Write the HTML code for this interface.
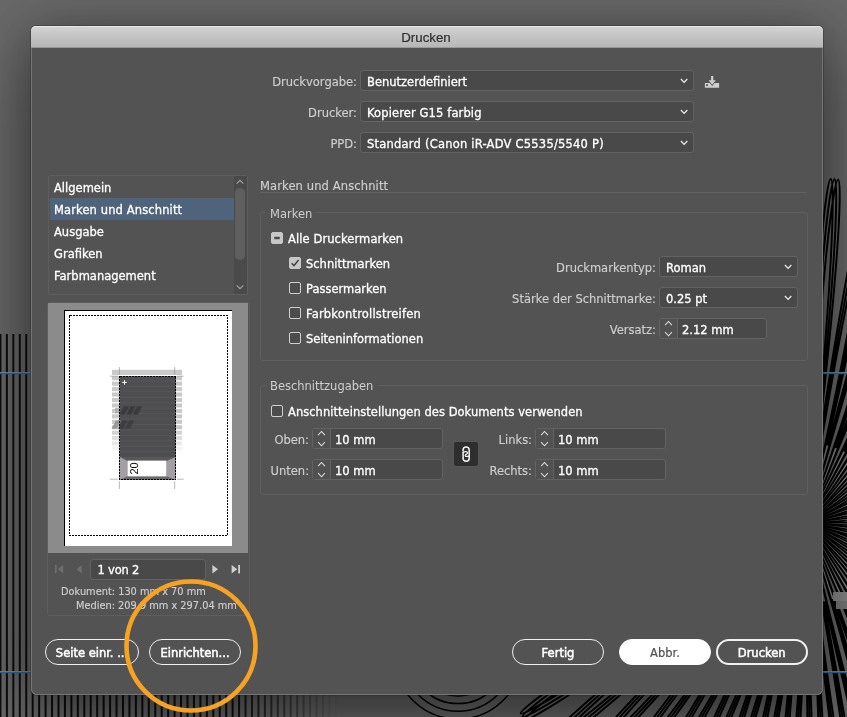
<!DOCTYPE html>
<html lang="de">
<head>
<meta charset="utf-8">
<title>Drucken</title>
<style>
html,body{margin:0;padding:0;}
body{width:847px;height:717px;overflow:hidden;position:relative;background:#696969;font-family:"DejaVu Sans","Liberation Sans",sans-serif;font-size:11.5px;color:#fff;}
.abs{position:absolute;}
#bg{position:absolute;left:0;top:0;width:847px;height:717px;}
#dlg{position:absolute;left:31px;top:26px;width:792px;height:669px;background:#535353;border-radius:5px 5px 6px 6px;box-shadow:inset 0 0 0 1px #767676,0 0 0 1px rgba(30,30,30,.3),0 0 44px rgba(0,0,0,.14),0 22px 70px rgba(0,0,0,.52);}
#tb{position:absolute;left:0;top:0;width:792px;height:22px;border-radius:5px 5px 0 0;background:linear-gradient(#d4d4d4,#c6c6c6 40%,#b6b6b6);box-shadow:inset 0 1px 0 #e6e6e6,inset 0 -1px 0 #9a9a9a;}
#tb span{-webkit-text-stroke:.2px #2e2e2e;position:absolute;left:-1.2px;width:792px;top:3.6px;line-height:16px;text-align:center;color:#2e2e2e;font-family:"Liberation Sans",sans-serif;font-size:13.3px;will-change:transform;}
.t{-webkit-text-stroke:0.3px #fff;position:absolute;white-space:nowrap;line-height:14px;height:14px;}
.lbl{color:#cfcfcf;-webkit-text-stroke:0.15px #cfcfcf;}
.r{text-align:right;}
.fld{position:absolute;box-sizing:border-box;background:#494949;border:1px solid #636363;border-radius:3px;height:21px;}
.fld .v{-webkit-text-stroke:0.3px #fff;position:absolute;left:6px;top:3.6px;line-height:14px;white-space:nowrap;}
.fs{position:absolute;box-sizing:border-box;border:1px solid #5f5f5f;border-radius:3px;}
.lg{position:absolute;background:#535353;color:#cfcfcf;line-height:14px;padding:0 4px;white-space:nowrap;}
.cb{position:absolute;box-sizing:border-box;width:12px;height:12px;border:1px solid #d0d0d0;border-radius:2px;background:#4c4c4c;}
.cb.on{background:#c8c8c8;border-color:#c8c8c8;}
.btn{position:absolute;box-sizing:border-box;height:26px;border:1px solid #f0f0f0;border-radius:13px;text-align:center;line-height:26.9px;font-size:11.5px;color:#fff;white-space:nowrap;-webkit-text-stroke:0.5px #fff;}
svg{position:absolute;overflow:visible;}
.sp::before{content:"";position:absolute;left:17px;top:0;width:1px;height:19px;background:#636363;}
.sp::after{content:"";position:absolute;left:0;top:0;width:17px;height:19px;background:#515151;border-radius:2px 0 0 2px;}
</style>
</head>
<body>
<svg id="bg" width="847" height="717" viewBox="0 0 847 717"><defs><linearGradient id="sf" x1="0" y1="0" x2="1" y2="0"><stop offset="0" stop-color="#fff"/><stop offset="0.68" stop-color="#fff"/><stop offset="1" stop-color="#000"/></linearGradient><mask id="sm" maskUnits="userSpaceOnUse" x="0" y="330" width="340" height="390"><rect x="0" y="330" width="340" height="390" fill="url(#sf)"/></mask></defs><g mask="url(#sm)"><path d="M0.44 334V717M6.89 334V717M13.34 334V717M19.79 334V717M26.24 334V717M32.69 334V717M39.14 334V717M45.59 334V717M52.04 334V717M58.49 334V717M64.94 334V717M71.39 334V717M77.84 334V717M84.29 334V717M90.74 334V717M97.19 334V717M103.64 334V717M110.09 334V717M116.54 334V717M122.99 334V717M129.44 334V717M135.89 334V717M142.34 334V717M148.79 334V717M155.24 334V717M161.69 334V717M168.14 334V717M174.59 334V717M181.04 334V717M187.49 334V717M193.94 334V717M200.39 334V717M206.84 334V717M213.29 334V717M219.74 334V717M226.19 334V717M232.64 334V717M239.09 334V717M245.54 334V717M251.99 334V717M258.44 334V717M264.89 334V717M271.34 334V717M277.79 334V717M284.24 334V717M290.69 334V717M297.14 334V717M303.59 334V717M310.04 334V717M316.49 334V717M322.94 334V717M329.39 334V717M335.84 334V717" stroke="#0e0e0e" stroke-width="2" fill="none"/></g><path d="M808 523C716.5 72.2 754.5 66.1 808 523M808 523C721.4 71.2 759.5 65.6 808 523M808 523C726.2 70.3 764.4 65.1 808 523M808 523C767.5 64.8 806.0 63.0 808 523M808 523C772.5 64.4 811.0 63.0 808 523M808 523C777.4 64.0 816.0 63.1 808 523M808 523C819.1 63.1 857.5 65.7 808 523M808 523C824.1 63.3 862.5 66.2 808 523M808 523C829.0 63.5 867.4 66.9 808 523M808 523C870.5 67.3 908.4 74.1 808 523M808 523C875.4 68.0 913.3 75.2 808 523M808 523C880.3 68.7 918.1 76.4 808 523M808 523C921.1 77.1 958.0 88.2 808 523M808 523C925.9 78.4 962.7 89.8 808 523M808 523C930.8 79.7 967.4 91.5 808 523M808 523C970.3 92.6 1005.8 107.7 808 523M808 523C975.0 94.4 1010.3 109.9 808 523M808 523C979.6 96.2 1014.7 112.1 808 523M808 523C1017.5 113.5 1051.0 132.4 808 523M808 523C1021.9 115.8 1055.3 135.1 808 523M808 523C1026.3 118.1 1059.4 137.8 808 523M808 523C1062.0 139.5 1093.2 162.1 808 523M808 523C1066.2 142.3 1097.1 165.2 808 523M808 523C1070.3 145.1 1101.0 168.4 808 523M808 523C1103.4 170.4 1131.9 196.3 808 523M808 523C1107.2 173.6 1135.4 199.8 808 523M808 523C1110.9 176.8 1138.8 203.4 808 523M808 523C1141.0 205.7 1166.4 234.6 808 523M808 523C1144.4 209.3 1169.5 238.5 808 523M808 523C1147.8 212.9 1172.6 242.5 808 523M808 523C1174.4 244.9 1196.4 276.6 808 523M808 523C1177.4 248.9 1199.1 280.8 808 523M808 523C1180.4 252.9 1201.7 285.0 808 523M808 523C1203.3 287.7 1221.6 321.6 808 523M808 523C1205.8 292.0 1223.7 326.1 808 523M808 523C1208.3 296.3 1225.8 330.6 808 523M808 523C1227.1 333.5 1241.5 369.2 808 523M808 523C1229.2 338.0 1243.2 373.9 808 523M808 523C1231.1 342.6 1244.8 378.6 808 523M808 523C1245.7 381.6 1256.0 418.7 808 523M808 523C1247.2 386.3 1257.1 423.5 808 523M808 523C1248.7 391.1 1258.2 428.4 808 523M808 523C1258.8 431.5 1264.9 469.5 808 523M808 523C1259.8 436.4 1265.4 474.5 808 523M808 523C1260.7 441.2 1265.9 479.4 808 523M808 523C1266.2 482.5 1268.0 521.0 808 523M808 523C1266.6 487.5 1268.0 526.0 808 523M808 523C1267.0 492.4 1267.9 531.0 808 523M808 523C1267.9 534.1 1265.3 572.5 808 523M808 523C1267.7 539.1 1264.8 577.5 808 523M808 523C1267.5 544.0 1264.1 582.4 808 523M808 523C1263.7 585.5 1256.9 623.4 808 523M808 523C1263.0 590.4 1255.8 628.3 808 523M808 523C1262.3 595.3 1254.6 633.1 808 523M808 523C1253.9 636.1 1242.8 673.0 808 523M808 523C1252.6 640.9 1241.2 677.7 808 523M808 523C1251.3 645.8 1239.5 682.4 808 523M808 523C1238.4 685.3 1223.3 720.8 808 523M808 523C1236.6 690.0 1221.1 725.3 808 523M808 523C1234.8 694.6 1218.9 729.7 808 523M808 523C1217.5 732.5 1198.6 766.0 808 523M808 523C1215.2 736.9 1195.9 770.3 808 523M808 523C1212.9 741.3 1193.2 774.4 808 523M808 523C1191.5 777.0 1168.9 808.2 808 523M808 523C1188.7 781.2 1165.8 812.1 808 523M808 523C1185.9 785.3 1162.6 816.0 808 523M808 523C1160.6 818.4 1134.7 846.9 808 523M808 523C1157.4 822.2 1131.2 850.4 808 523M808 523C1154.2 825.9 1127.6 853.8 808 523M808 523C1125.3 856.0 1096.4 881.4 808 523M808 523C1121.7 859.4 1092.5 884.5 808 523M808 523C1118.1 862.8 1088.5 887.6 808 523M808 523C1086.1 889.4 1054.4 911.4 808 523M808 523C1082.1 892.4 1050.2 914.1 808 523M808 523C1078.1 895.4 1046.0 916.7 808 523M808 523C1043.3 918.3 1009.4 936.6 808 523M808 523C1039.0 920.8 1004.9 938.7 808 523M808 523C1034.7 923.3 1000.4 940.8 808 523M808 523C997.5 942.1 961.8 956.5 808 523M808 523C993.0 944.2 957.1 958.2 808 523M808 523C988.4 946.1 952.4 959.8 808 523M808 523C949.4 960.7 912.3 971.0 808 523M808 523C944.7 962.2 907.5 972.1 808 523M808 523C939.9 963.7 902.6 973.2 808 523M808 523C899.5 973.8 861.5 979.9 808 523M808 523C894.6 974.8 856.5 980.4 808 523M808 523C889.8 975.7 851.6 980.9 808 523M808 523C848.5 981.2 810.0 983.0 808 523M808 523C843.5 981.6 805.0 983.0 808 523M808 523C838.6 982.0 800.0 982.9 808 523M808 523C796.9 982.9 758.5 980.3 808 523M808 523C791.9 982.7 753.5 979.8 808 523M808 523C787.0 982.5 748.6 979.1 808 523M808 523C745.5 978.7 707.6 971.9 808 523M808 523C740.6 978.0 702.7 970.8 808 523M808 523C735.7 977.3 697.9 969.6 808 523M808 523C694.9 968.9 658.0 957.8 808 523M808 523C690.1 967.6 653.3 956.2 808 523M808 523C685.2 966.3 648.6 954.5 808 523M808 523C645.7 953.4 610.2 938.3 808 523M808 523C641.0 951.6 605.7 936.1 808 523M808 523C636.4 949.8 601.3 933.9 808 523M808 523C598.5 932.5 565.0 913.6 808 523M808 523C594.1 930.2 560.7 910.9 808 523M808 523C589.7 927.9 556.6 908.2 808 523M808 523C554.0 906.5 522.8 883.9 808 523M808 523C549.8 903.7 518.9 880.8 808 523M808 523C545.7 900.9 515.0 877.6 808 523M808 523C512.6 875.6 484.1 849.7 808 523M808 523C508.8 872.4 480.6 846.2 808 523M808 523C505.1 869.2 477.2 842.6 808 523M808 523C475.0 840.3 449.6 811.4 808 523M808 523C471.6 836.7 446.5 807.5 808 523M808 523C468.2 833.1 443.4 803.5 808 523M808 523C441.6 801.1 419.6 769.4 808 523M808 523C438.6 797.1 416.9 765.2 808 523M808 523C435.6 793.1 414.3 761.0 808 523M808 523C412.7 758.3 394.4 724.4 808 523M808 523C410.2 754.0 392.3 719.9 808 523M808 523C407.7 749.7 390.2 715.4 808 523M808 523C388.9 712.5 374.5 676.8 808 523M808 523C386.8 708.0 372.8 672.1 808 523M808 523C384.9 703.4 371.2 667.4 808 523" stroke="#000" stroke-width="1.9" fill="none"/><path d="M806.5 507.1L799.8 443.4L801.6 443.3zM808.3 507.0L808.7 443.0L810.6 443.0zM810.1 507.1L817.7 443.6L819.5 443.8zM811.9 507.5L826.5 445.2L828.3 445.6zM813.6 508.0L835.1 447.7L836.8 448.4zM815.2 508.7L843.4 451.3L845.0 452.1zM816.8 509.6L851.2 455.7L852.7 456.7zM818.2 510.7L858.5 460.9L859.9 462.1zM819.5 511.9L865.1 467.0L866.4 468.3zM820.7 513.3L871.0 473.7L872.1 475.2zM821.7 514.8L876.1 481.1L877.1 482.6zM822.6 516.4L880.4 489.0L881.2 490.6zM823.2 518.0L883.8 497.3L884.3 499.0zM823.7 519.8L886.2 505.9L886.5 507.7zM823.9 521.5L887.6 514.8L887.7 516.6zM824.0 523.3L888.0 523.7L888.0 525.6zM823.9 525.1L887.4 532.7L887.2 534.5zM823.5 526.9L885.8 541.5L885.4 543.3zM823.0 528.6L883.3 550.1L882.6 551.8zM822.3 530.2L879.7 558.4L878.9 560.0zM821.4 531.8L875.3 566.2L874.3 567.7zM820.3 533.2L870.1 573.5L868.9 574.9zM819.1 534.5L864.0 580.1L862.7 581.4zM817.7 535.7L857.3 586.0L855.8 587.1zM816.2 536.7L849.9 591.1L848.4 592.1zM814.6 537.6L842.0 595.4L840.4 596.2zM813.0 538.2L833.7 598.8L832.0 599.3zM811.2 538.7L825.1 601.2L823.3 601.5zM809.5 538.9L816.2 602.6L814.4 602.7zM807.7 539.0L807.3 603.0L805.4 603.0zM805.9 538.9L798.3 602.4L796.5 602.2zM804.1 538.5L789.5 600.8L787.7 600.4zM802.4 538.0L780.9 598.3L779.2 597.6zM800.8 537.3L772.6 594.7L771.0 593.9zM799.2 536.4L764.8 590.3L763.3 589.3zM797.8 535.3L757.5 585.1L756.1 583.9zM796.5 534.1L750.9 579.0L749.6 577.7zM795.3 532.7L745.0 572.3L743.9 570.8zM794.3 531.2L739.9 564.9L738.9 563.4zM793.4 529.6L735.6 557.0L734.8 555.4zM792.8 528.0L732.2 548.7L731.7 547.0z" fill="#868686"/><circle cx="458" cy="655" r="41.0" stroke="#000" stroke-width="1.5" fill="none"/><circle cx="458" cy="655" r="48.6" stroke="#000" stroke-width="1.5" fill="none"/><circle cx="458" cy="655" r="56.2" stroke="#000" stroke-width="1.5" fill="none"/><circle cx="458" cy="655" r="64.0" stroke="#000" stroke-width="1.5" fill="none"/><path d="M0 372.6H32M822 372.6H847M0 671.6H32M822 671.6H847" stroke="#8e8e8e" stroke-width="1"/><path d="M0 373.6H32M822 373.6H847M0 672.7H32M822 672.7H847" stroke="#1b6fbd" stroke-width="1.3"/><rect x="833" y="592" width="14" height="9" fill="#8a8a8a"/><rect x="836" y="601" width="11" height="8" fill="#7c7c7c"/></svg>
<div id="dlg">
<div id="tb"><span>Drucken</span></div>
</div>

<div id="c" class="abs" style="left:0;top:0;width:847px;height:717px;will-change:transform;">
<!-- top rows -->
<div class="t lbl r" style="left:200px;width:157px;top:74.5px;">Druckvorgabe:</div>
<div class="fld" style="left:360px;top:70px;width:334px;"><span class="v">Benutzerdefiniert</span><svg class="chev" style="right:5px;top:6.9px;" width="8" height="6" viewBox="0 0 8 6"><path d="M0.9 1 L4.1 4.4 L7.3 1" fill="none" stroke="#ececec" stroke-width="1.25"/></svg></div>
<div class="t lbl r" style="left:200px;width:157px;top:105.5px;">Drucker:</div>
<div class="fld" style="left:360px;top:101px;width:334px;"><span class="v" style="letter-spacing:.12px">Kopierer G15 farbig</span><svg class="chev" style="right:5px;top:6.9px;" width="8" height="6" viewBox="0 0 8 6"><path d="M0.9 1 L4.1 4.4 L7.3 1" fill="none" stroke="#ececec" stroke-width="1.25"/></svg></div>
<div class="t lbl r" style="left:200px;width:157px;top:136.5px;">PPD:</div>
<div class="fld" style="left:360px;top:132px;width:334px;"><span class="v" style="letter-spacing:.22px">Standard (Canon iR-ADV C5535/5540 P)</span><svg class="chev" style="right:5px;top:6.9px;" width="8" height="6" viewBox="0 0 8 6"><path d="M0.9 1 L4.1 4.4 L7.3 1" fill="none" stroke="#ececec" stroke-width="1.25"/></svg></div>
<svg style="left:704px;top:75px;" width="16" height="14" viewBox="0 0 16 14"><path d="M7.1 0.9h2.2v4.3h2.5L8.2 9.7 4.6 5.2h2.5z" fill="#cfcfcf"/><path d="M0.9 7.9h4.9L8.2 10.9 10.6 7.9h4.5v4.9H0.9z" fill="#cfcfcf"/><rect x="2.1" y="9.3" width="1.9" height="1.6" fill="#535353"/></svg>

<!-- list -->
<div class="abs" style="left:48px;top:175px;width:200px;height:120px;box-sizing:border-box;border:1px solid #5e5e5e;border-radius:2px;background:#535353;"></div>
<div class="abs" style="left:234px;top:176px;width:13px;height:118px;background:#4a4a4a;"></div>
<div class="abs" style="left:235px;top:188px;width:9.6px;height:72px;border-radius:4.8px;background:#5f5f5f;"></div>
<svg style="left:235.6px;top:178.6px;" width="8" height="6" viewBox="0 0 8 6"><path d="M0.7 4.6 L4 1.3 L7.3 4.6" fill="none" stroke="#a4a4a4" stroke-width="1.1"/></svg>
<svg style="left:235.6px;top:284.4px;" width="8" height="6" viewBox="0 0 8 6"><path d="M0.7 1.3 L4 4.6 L7.3 1.3" fill="none" stroke="#a4a4a4" stroke-width="1.1"/></svg>
<div class="abs" style="left:50px;top:198px;width:184px;height:22px;background:#4f637a;"></div>
<div class="t" style="left:54px;top:180.7px;">Allgemein</div>
<div class="t" style="left:54px;top:202.7px;letter-spacing:.12px">Marken und Anschnitt</div>
<div class="t" style="left:54px;top:224.7px;">Ausgabe</div>
<div class="t" style="left:54px;top:246.7px;">Grafiken</div>
<div class="t" style="left:54px;top:268.7px;">Farbmanagement</div>

<!-- preview -->
<div class="abs" style="left:47px;top:302px;width:203px;height:314px;box-sizing:border-box;border:1px solid #5e5e5e;border-radius:3px;"></div>
<div class="abs" style="left:48px;top:303px;width:200px;height:250px;background:#8b8b8b;"></div>
<div class="abs" id="pg" style="left:64px;top:310px;width:167.5px;height:236px;background:#fff;box-sizing:border-box;border:1px solid #000;border-right:none;border-bottom:none;"></div>
<svg id="pv" style="left:0;top:0;" width="847" height="717" viewBox="0 0 847 717"><defs><linearGradient id="fade" x1="0" y1="0" x2="0" y2="1"><stop offset="0" stop-color="#fff" stop-opacity="0"/><stop offset="0.66" stop-color="#fff" stop-opacity="0"/><stop offset="0.95" stop-color="#fff" stop-opacity="1"/><stop offset="1" stop-color="#fff" stop-opacity="1"/></linearGradient></defs><rect x="69.5" y="315.5" width="157.5" height="220" fill="none" stroke="#000" stroke-width="1" stroke-dasharray="2 1" shape-rendering="crispEdges"/><g fill="#c9c9c9"><rect x="112" y="369.8" width="70" height="5.2"/><rect x="112" y="376.2" width="70" height="4.1"/><rect x="112" y="381.6" width="70" height="4.1"/><rect x="112" y="387.1" width="70" height="4.1"/><rect x="112" y="392.5" width="70" height="4.1"/><rect x="112" y="398.0" width="70" height="4.1"/><rect x="112" y="403.4" width="70" height="4.1"/><rect x="112" y="408.9" width="70" height="4.1"/><rect x="112" y="414.3" width="70" height="4.1"/><rect x="112" y="419.8" width="70" height="4.1"/><rect x="112" y="425.2" width="70" height="4.1"/><rect x="112" y="430.7" width="70" height="4.1"/><rect x="112" y="436.1" width="70" height="4.1"/><rect x="112" y="441.6" width="70" height="4.1"/><rect x="112" y="447.0" width="70" height="4.1"/><rect x="112" y="452.5" width="70" height="4.1"/></g><rect x="111" y="369" width="72" height="89.5" fill="url(#fade)"/><rect x="119.5" y="376.2" width="56.2" height="103.6" fill="#4e4e50"/><g stroke="#5d5d5f" stroke-width="0.6"><path d="M120 380.9H175.5"/><path d="M120 386.3H175.5"/><path d="M120 391.8H175.5"/><path d="M120 397.2H175.5"/><path d="M120 402.7H175.5"/><path d="M120 408.1H175.5"/><path d="M120 413.6H175.5"/><path d="M120 419.0H175.5"/><path d="M120 424.5H175.5"/><path d="M120 429.9H175.5"/><path d="M120 435.4H175.5"/><path d="M120 440.8H175.5"/><path d="M120 446.3H175.5"/><path d="M120 451.7H175.5"/></g><rect x="115" y="408" width="4.5" height="5.5" fill="#a9a9a9" opacity=".8"/><path d="M119.6 414.6L123.8 406.3L129.0 406.3L124.8 414.6zM126.2 414.6L130.4 406.3L135.6 406.3L131.4 414.6zM132.8 414.6L137.0 406.3L142.2 406.3L138.0 414.6z" fill="#38383a" opacity=".9"/><path d="M111.6 428.8L115.8 420.4L121.0 420.4L116.8 428.8z" fill="#8e8e8e" opacity=".85"/><path d="M118.2 428.8L122.4 420.4L127.6 420.4L123.4 428.8zM124.8 428.8L129.0 420.4L134.2 420.4L130.0 428.8z" fill="#3c3c3e" opacity=".85"/><path d="M120 457H175.5V479.8H120z" fill="#a29fa3"/><path d="M120 457H175.5L166.5 461H127.5z" fill="#58585a"/><path d="M120 479.8H175.5L166.5 476.3H127.5z" fill="#6a686b"/><rect x="127.7" y="460.6" width="38.5" height="15.7" fill="#fff"/><text transform="translate(138.2 474.6) rotate(-90)" font-family="Liberation Sans, sans-serif" font-size="11" fill="#111">20</text><rect x="119.5" y="376.2" width="56.2" height="103.6" fill="none" stroke="#000" stroke-width="1" stroke-dasharray="2 1" shape-rendering="crispEdges"/><g stroke="#9a9a9a" stroke-width="0.7"><path d="M119.4 367V374.7M174.7 367V374.7M109.8 376.2H117.9M177 376.2H183.7M109.8 479.2H117.9M177 479.2H183.7M119.4 481.3V488.9M174.7 481.3V488.9"/></g><path d="M122.2 382.4H126.8M124.5 380.1V384.7" stroke="#fff" stroke-width="1"/></svg>

<!-- nav -->
<div class="fld" style="left:90px;top:558.5px;width:116px;"><span class="v" style="left:6.5px;letter-spacing:-.2px">1 von 2</span></div>
<svg style="left:54.1px;top:562.8px;" width="190" height="12" viewBox="0 0 190 12">
<g fill="#6e6e6e"><rect x="1" y="2" width="1.6" height="8.4"/><path d="M9.2 2 v8.4 L3.6 6.2z"/><path d="M27.6 2 v8.4 L22.6 6.2z"/></g>
<g fill="#cfcfcf"><path d="M158.4 2 v8.4 L164 6.2z"/><path d="M177.6 2 v8.4 L183.2 6.2z"/><rect x="184.2" y="2" width="1.8" height="8.4"/></g>
</svg>
<div class="t lbl" style="left:61px;top:586px;font-size:9.8px;line-height:12px;height:12px;">Dokument: 130 mm x 70 mm</div>
<div class="t lbl" style="left:76px;top:600px;font-size:9.8px;line-height:12px;height:12px;">Medien: 209.9 mm x 297.04 mm</div>

<!-- section header -->
<div class="t lbl" style="left:260px;top:179px;letter-spacing:.12px">Marken und Anschnitt</div>
<div class="abs" style="left:260px;top:192px;width:547px;height:1px;background:#616161;"></div>

<!-- Marken fieldset -->
<div class="fs" style="left:260px;top:212px;width:548px;height:149px;"></div>
<div class="lg" style="left:266px;top:206.5px;">Marken</div>
<div class="cb on" style="left:271px;top:232px;"></div>
<svg style="left:271px;top:232px;" width="12" height="12" viewBox="0 0 12 12"><rect x="3.3" y="4.8" width="5.4" height="2.4" rx="0.5" fill="#4a4a4a"/></svg>
<div class="t" style="left:288px;top:231.7px;letter-spacing:.09px">Alle Druckermarken</div>
<div class="cb on" style="left:289px;top:257px;"></div>
<svg style="left:289px;top:257px;" width="12" height="12" viewBox="0 0 12 12"><path d="M2.6 6.2 L5 8.6 L9.6 3" fill="none" stroke="#444" stroke-width="1.5"/></svg>
<div class="t" style="left:306px;top:256.7px;">Schnittmarken</div>
<div class="cb" style="left:289px;top:282px;"></div>
<div class="t" style="left:306px;top:281.7px;">Passermarken</div>
<div class="cb" style="left:289px;top:307px;"></div>
<div class="t" style="left:306px;top:306.7px;letter-spacing:.18px">Farbkontrollstreifen</div>
<div class="cb" style="left:289px;top:332px;"></div>
<div class="t" style="left:306px;top:331.7px;">Seiteninformationen</div>

<div class="t lbl r" style="left:456px;width:200px;top:260.5px;">Druckmarkentyp:</div>
<div class="fld" style="left:659px;top:256px;width:139px;"><span class="v">Roman</span><svg class="chev" style="right:5px;top:6.9px;" width="8" height="6" viewBox="0 0 8 6"><path d="M0.9 1 L4.1 4.4 L7.3 1" fill="none" stroke="#ececec" stroke-width="1.25"/></svg></div>
<div class="t lbl r" style="left:456px;width:200px;top:291.5px;">Stärke der Schnittmarke:</div>
<div class="fld" style="left:659px;top:287px;width:139px;"><span class="v">0.25 pt</span><svg class="chev" style="right:5px;top:6.9px;" width="8" height="6" viewBox="0 0 8 6"><path d="M0.9 1 L4.1 4.4 L7.3 1" fill="none" stroke="#ececec" stroke-width="1.25"/></svg></div>
<div class="t lbl r" style="left:456px;width:200px;top:322.5px;">Versatz:</div>
<div class="fld sp" style="left:659px;top:318px;width:108px;"><svg style="left:0;top:0;z-index:2;" width="18" height="19" viewBox="0 0 18 19"><path d="M5.1 6.2 L8.5 2.5 L11.9 6.2 M5.1 13.1 L8.5 16.8 L11.9 13.1" fill="none" stroke="#dedede" stroke-width="1.05"/></svg><span class="v" style="left:22px;">2.12 mm</span></div>

<!-- Beschnittzugaben -->
<div class="fs" style="left:260px;top:385px;width:548px;height:110px;"></div>
<div class="lg" style="left:266px;top:378.5px;">Beschnittzugaben</div>
<div class="cb" style="left:271px;top:405px;"></div>
<div class="t" style="left:288px;top:404.7px;letter-spacing:.035px">Anschnitteinstellungen des Dokuments verwenden</div>
<div class="t lbl r" style="left:209px;width:100px;top:432.5px;">Oben:</div>
<div class="fld sp" style="left:312px;top:428px;width:131px;"><svg style="left:0;top:0;z-index:2;" width="18" height="19" viewBox="0 0 18 19"><path d="M5.1 6.2 L8.5 2.5 L11.9 6.2 M5.1 13.1 L8.5 16.8 L11.9 13.1" fill="none" stroke="#dedede" stroke-width="1.05"/></svg><span class="v" style="left:22px;">10 mm</span></div>
<div class="t lbl r" style="left:209px;width:100px;top:463.5px;">Unten:</div>
<div class="fld sp" style="left:312px;top:459px;width:131px;"><svg style="left:0;top:0;z-index:2;" width="18" height="19" viewBox="0 0 18 19"><path d="M5.1 6.2 L8.5 2.5 L11.9 6.2 M5.1 13.1 L8.5 16.8 L11.9 13.1" fill="none" stroke="#dedede" stroke-width="1.05"/></svg><span class="v" style="left:22px;">10 mm</span></div>
<div class="abs" style="left:454px;top:442px;width:24px;height:24px;border-radius:2px;background:#2e2e2e;box-shadow:0 0 0 0.6px #5c5c5c;"></div>
<svg style="left:454px;top:442px;" width="24" height="24" viewBox="0 0 24 24"><g fill="none" stroke="#f6f6f6" stroke-width="1.5" stroke-linecap="round"><path d="M9.1 8.9 V8.0 a3.05 3.05 0 0 1 6.1 0 V16.2 a3.05 3.05 0 0 1 -6.1 0 V10.6"/><path d="M9.3 10.3 C11 9.0 13.7 9.4 13.5 11 C13.3 12.4 11.3 12.2 11.2 13.4 C11.1 14.8 13.8 14.7 15 13.9" stroke-width="1.25"/></g></svg>
<div class="t lbl r" style="left:432px;width:100px;top:432.5px;">Links:</div>
<div class="fld sp" style="left:535px;top:428px;width:131px;"><svg style="left:0;top:0;z-index:2;" width="18" height="19" viewBox="0 0 18 19"><path d="M5.1 6.2 L8.5 2.5 L11.9 6.2 M5.1 13.1 L8.5 16.8 L11.9 13.1" fill="none" stroke="#dedede" stroke-width="1.05"/></svg><span class="v" style="left:22px;">10 mm</span></div>
<div class="t lbl r" style="left:432px;width:100px;top:463.5px;">Rechts:</div>
<div class="fld sp" style="left:535px;top:459px;width:131px;"><svg style="left:0;top:0;z-index:2;" width="18" height="19" viewBox="0 0 18 19"><path d="M5.1 6.2 L8.5 2.5 L11.9 6.2 M5.1 13.1 L8.5 16.8 L11.9 13.1" fill="none" stroke="#dedede" stroke-width="1.05"/></svg><span class="v" style="left:22px;">10 mm</span></div>

<!-- buttons -->
<div class="btn" style="left:45px;top:639px;width:94px;">Seite einr. ...</div>
<div class="btn" style="left:149px;top:639px;width:92px;">Einrichten...</div>
<div class="btn" style="left:512px;top:639px;width:92px;">Fertig</div>
<div class="btn" style="left:619px;top:639px;width:92px;background:#fff;border-color:#fff;color:#505050;-webkit-text-stroke:0.2px #505050;">Abbr.</div>
<div class="btn" style="left:715.5px;top:638.7px;width:92.4px;height:26.5px;border-width:2px;line-height:25.3px;">Drucken</div>
</div>
<svg id="ring" style="left:0;top:0;" width="847" height="717" viewBox="0 0 847 717"><circle cx="191" cy="646" r="64.5" fill="none" stroke="#f6a324" stroke-width="4.6"/></svg>
</body>
</html>
